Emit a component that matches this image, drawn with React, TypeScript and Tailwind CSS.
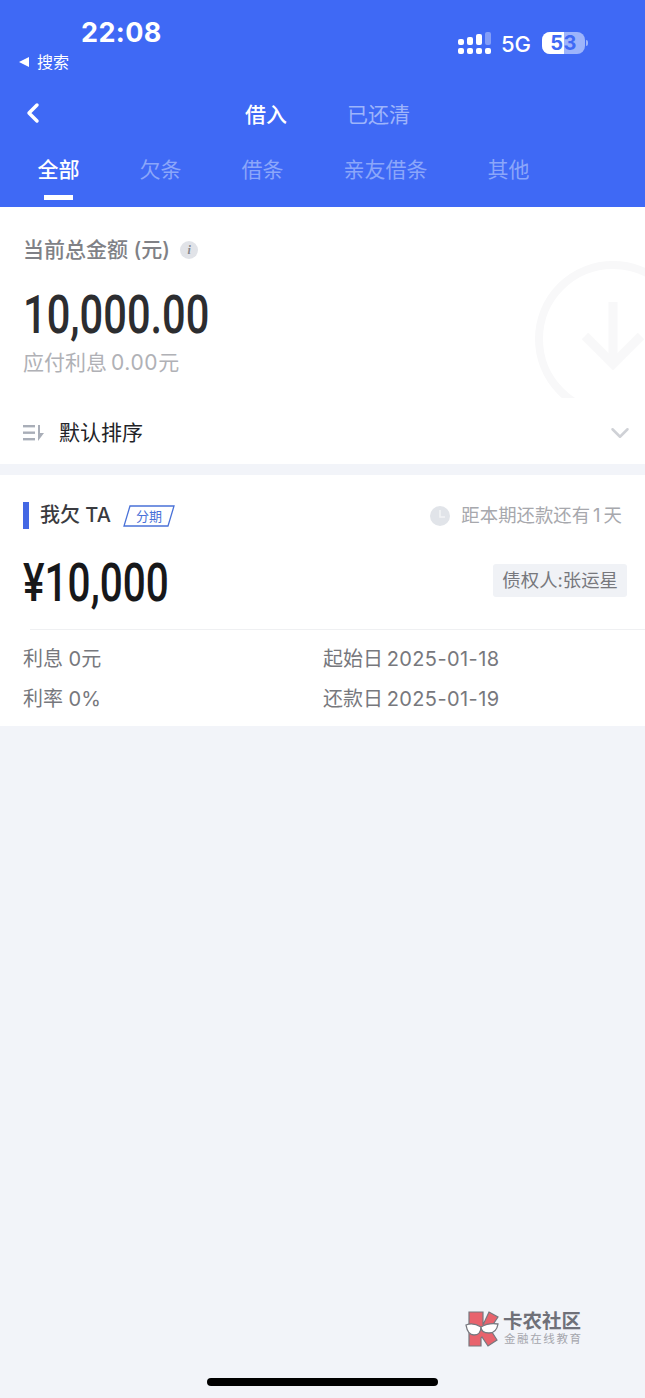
import {ChevronDown, ChevronLeft} from 'lucide-react'

const cjk = "font-['Inter','Noto_Sans_CJK_SC',sans-serif]"

function SignalDots() {
    return (
        <svg width="33" height="22" viewBox="0 0 33 22" className="text-white">
            <rect x="0" y="7" width="6" height="6" rx="2" fill="currentColor"/>
            <rect x="9" y="5" width="6" height="8" rx="2" fill="currentColor"/>
            <rect x="18" y="2" width="6" height="11" rx="2" fill="currentColor"/>
            <rect x="27" y="0" width="6" height="13" rx="2" fill="#fff" opacity="0.35"/>
            <rect x="0" y="16" width="6" height="6" rx="2" fill="currentColor"/>
            <rect x="9" y="16" width="6" height="6" rx="2" fill="currentColor"/>
            <rect x="18" y="16" width="6" height="6" rx="2" fill="currentColor"/>
            <rect x="27" y="16" width="6" height="6" rx="2" fill="currentColor"/>
        </svg>
    )
}

function Battery() {
    return (
        <div className="flex items-center gap-[1px]">
            <div className="relative w-[43px] h-[22px] rounded-[8px] overflow-hidden bg-[#9db4fb] flex items-center justify-center">
                <div className="absolute left-0 top-0 bottom-0 w-[22px] bg-white"/>
                <span className="relative text-[#3f69f5] text-[20px] leading-none font-bold font-['Inter',sans-serif] tracking-[0.5px]">53</span>
            </div>
            <div className="w-[2px] h-[6px] rounded-r-full bg-[#9db4fb]"/>
        </div>
    )
}

function WatermarkLogo() {
    return (
        <div className="absolute left-[465px] top-[1310px] flex items-center gap-[3px]">
            <svg width="35" height="37" viewBox="0 0 35 37">
                <path d="M4 2h14v13L24 2l9 5-8 12 7 11-9 6-6-9-1 1v8H4z" fill="#e8636d" stroke="#77787f" strokeWidth="1.2"/>
                <path d="M1 15c5-2 10-1 15 2 0 4-2 8-7 8-5 0-7-4-8-10z" fill="#fff" stroke="#77787f" strokeWidth="1.3"/>
                <path d="M16 17c5-3 11-4 17-3-1 6-4 9-9 9-5 0-8-2-8-6z" fill="#fff" stroke="#77787f" strokeWidth="1.3"/>
            </svg>
            <div className="flex flex-col">
                <span className={`${cjk} text-[19.5px] leading-[21px] font-bold text-[#6f7078]`}>卡农社区</span>
                <span className={`${cjk} ml-[1px] text-[11.5px] leading-[14px] tracking-[1.6px] text-[#a5a6ad]`}>金融在线教育</span>
            </div>
        </div>
    )
}

const tabs = [
    {label: '全部', w: 'w-[42px]', active: true},
    {label: '欠条', w: 'w-[42px]'},
    {label: '借条', w: 'w-[42px]'},
    {label: '亲友借条', w: 'w-[84px]'},
    {label: '其他', w: 'w-[42px]'},
]

export default function App() {
    return (
        <div className={`relative w-[645px] h-[1398px] overflow-hidden bg-[#f2f4f9] ${cjk}`}>
            <header className="h-[207px] bg-[#3f69f5] text-white">
                <div className="h-[84px] flex justify-between">
                    <div className="pl-[19px] pt-[17px]">
                        <div className="ml-[62px] text-[27px] leading-[32px] font-bold font-['Inter',sans-serif] tracking-[0.4px]">22:08</div>
                        <div className="mt-[2px] flex items-center gap-[8px]">
                            <span className="w-0 h-0 border-y-[5.5px] border-y-transparent border-r-[10px] border-r-white"/>
                            <span className="text-[16px] leading-[22px]">搜索</span>
                        </div>
                    </div>
                    <div className="pt-[32px] pr-[57px] flex items-start gap-[11px]">
                        <SignalDots/>
                        <span className="text-[22px] leading-[24px] font-medium font-['Inter',sans-serif] -ml-[1px]">5G</span>
                        <Battery/>
                    </div>
                </div>
                <div className="h-[60px] relative flex items-center justify-center gap-[60px] pl-[10px] pt-[2px]">
                    <ChevronLeft size={32} strokeWidth={2.6} className="absolute left-[17px] top-[13px]"/>
                    <span className="text-[21px] font-medium">借入</span>
                    <span className="text-[21px] text-[#9db4fb]">已还清</span>
                </div>
                <nav className="flex gap-[60px] pl-[37.5px] pt-[1px]">
                    {tabs.map(t => (
                        <div key={t.label} className={`${t.w} flex flex-col items-center`}>
                            <span className={`text-[21px] leading-[50px] whitespace-nowrap h-[50px] ${t.active ? 'text-white font-medium' : 'text-[#8ba6fa]'}`}>{t.label}</span>
                            {t.active && <span className="w-[29px] h-[5px] bg-white"/>}
                        </div>
                    ))}
                </nav>
            </header>

            <section className="relative h-[257px] bg-white overflow-hidden px-[23px] pt-[28px]">
                <svg className="absolute left-[530px] top-[50px]" width="115" height="141" viewBox="0 0 115 141">
                    <circle cx="83" cy="82" r="74" fill="none" stroke="#f8f8f9" strokeWidth="8"/>
                    <path d="M83 45v62M55 79l28 28 28-28" fill="none" stroke="#f8f8f9" strokeWidth="9"/>
                </svg>
                <div className="relative flex items-center gap-[10px]">
                    <span className="text-[21px] leading-[30px] font-medium text-[#808186]">当前总金额 (元)</span>
                    <span className="w-[18px] h-[18px] rounded-full bg-[#e1e3e8] text-[#85868c] flex items-center justify-center text-[12px] font-['Liberation_Serif',serif] font-bold italic">i</span>
                </div>
                <div className="relative mt-[20px] h-[60px] text-[53px] leading-[60px] font-medium font-['Roboto',sans-serif] text-[#2c2d30] origin-left scale-x-[0.785] whitespace-nowrap">10,000.00</div>
                <div className="relative mt-[3px] text-[21px] leading-[30px] text-[#b0b1b6]">应付利息<span className="ml-[4px] tracking-[0.6px]">0.00元</span></div>
                <div className="relative mt-[40px] flex items-center justify-between">
                    <div className="flex items-center gap-[15px]">
                        <svg width="21" height="16" viewBox="0 0 21 16" fill="#a9aeb8">
                            <rect x="0" y="0" width="12" height="2.4"/>
                            <rect x="0" y="6.5" width="12" height="2.4"/>
                            <rect x="0" y="13" width="12" height="2.4"/>
                            <path d="M15 0h2v8h4l-6 8z"/>
                        </svg>
                        <span className="text-[21px] leading-[30px] text-[#222327]">默认排序</span>
                    </div>
                    <ChevronDown size={30} strokeWidth={2} className="text-[#cfd1d6] -mr-[13px]"/>
                </div>
            </section>

            <section className="mt-[11px] h-[251px] bg-white">
                <div className="pl-[23px] pr-[23px] pt-[27px] h-[79px] flex items-start justify-between">
                    <div className="flex items-center h-[27px]">
                        <span className="w-[6px] h-[27px] bg-[#4468e4]"/>
                        <span className="ml-[11px] text-[20px] leading-[27px] font-medium text-[#3a3b40]">我欠 TA</span>
                        <svg className="ml-[12px]" width="52" height="22" viewBox="0 0 52 22">
                            <path d="M7 1h44l-6 20H1z" fill="none" stroke="#4a72d8" strokeWidth="1.3"/>
                            <text x="26" y="16" textAnchor="middle" fontSize="13" fill="#4a72d8">分期</text>
                        </svg>
                    </div>
                    <div className="flex items-center h-[27px] gap-[11px]">
                        <svg width="20" height="20" viewBox="0 0 20 20">
                            <circle cx="10" cy="10" r="10" fill="#e1e4e9"/>
                            <path d="M10 4v7h5" fill="none" stroke="#f3f4f6" strokeWidth="1.6"/>
                        </svg>
                        <span className="text-[18.4px] leading-[27px] text-[#a7a8ad]">距本期还款还有<span className="mx-[3px]">1</span>天</span>
                    </div>
                </div>
                <div className="pl-[23px] pr-[18px] flex items-start justify-between h-[56px]">
                    <div className="mt-[1px] h-[56px] text-[53px] leading-[56px] font-medium font-['Roboto',sans-serif] text-[#17181a] origin-left scale-x-[0.765] whitespace-nowrap">¥10,000</div>
                    <div className="mt-[10px] h-[33px] px-[9px] rounded-[3px] bg-[#f0f2f6] text-[18.4px] leading-[33px] text-[#77787d] whitespace-nowrap">债权人:张运星</div>
                </div>
                <div className="ml-[30px] mt-[19px] border-t border-[#eff0f2]"/>
                <div className="pl-[23px] pt-[9px] grid grid-cols-[300px_1fr] text-[20px] leading-[40px] text-[#77787d]">
                    <span>利息 0元</span>
                    <span>起始日 <span className="-ml-[2px] tracking-[0.4px]">2025-01-18</span></span>
                    <span>利率 0%</span>
                    <span>还款日 <span className="-ml-[2px] tracking-[0.4px]">2025-01-19</span></span>
                </div>
            </section>

            <WatermarkLogo/>
            <div className="absolute left-[207px] top-[1378px] w-[231px] h-[8px] rounded-full bg-black"/>
        </div>
    )
}
